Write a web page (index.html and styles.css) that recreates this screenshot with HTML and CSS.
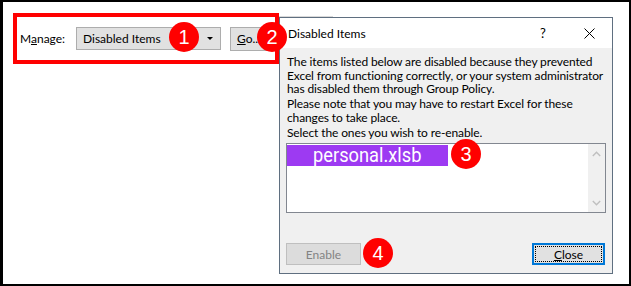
FILE: index.html
```html
<!DOCTYPE html>
<html lang="en">
  <head>
    <meta charset="UTF-8" />
    <title>Disabled Items</title>
    <link rel="stylesheet" href="styles.css">
  </head>
  <body>
    <div class="frame">
      <div class="manage">
        <span class="label">M<u>a</u>nage:</span>
        <div class="combo">
          <span>Disabled Items</span>
          <span class="caret"></span>
        </div>
        <button class="go"><u>G</u>o...</button>
      </div>

      <div class="dialog">
        <div class="titlebar">
          <span class="title">Disabled Items</span>
          <span class="caption help">?</span>
          <span class="caption">
            <svg width="11" height="11" viewBox="0 0 11 11">
              <path d="M0.5 0.5 L10.5 10.5 M10.5 0.5 L0.5 10.5" stroke="#000" stroke-width="1" fill="none" />
            </svg>
          </span>
        </div>
        <div class="body">
          <p>The items listed below are disabled because they prevented<br>Excel from functioning correctly, or your system administrator<br>has disabled them through Group Policy.</p>
          <p>Please note that you may have to restart Excel for these<br>changes to take place.</p>
          <p>Select the ones you wish to re-enable.</p>
          <div class="list">
            <div class="items">
              <div class="item selected"><span>personal.xlsb</span></div>
            </div>
            <div class="scroll">
              <svg width="9" height="6" viewBox="0 0 9 6">
                <path d="M0.8 5 L4.5 1.3 L8.2 5" stroke="#bfbfbf" stroke-width="1.4" fill="none" />
              </svg>
              <svg width="9" height="6" viewBox="0 0 9 6">
                <path d="M0.8 1 L4.5 4.7 L8.2 1" stroke="#bfbfbf" stroke-width="1.4" fill="none" />
              </svg>
            </div>
          </div>
          <div class="actions">
            <button class="btn" disabled>Enable</button>
            <button class="btn close"><span><u>C</u>lose</span></button>
          </div>
        </div>
      </div>

      <span class="edge"></span>
      <span class="badge b1">1</span>
      <span class="badge b2">2</span>
      <span class="badge b3">3</span>
      <span class="badge b4">4</span>
    </div>
  </body>
</html>
```

FILE: styles.css
```css
body {
  margin: 0;
  font-family: "Segoe UI", Lato, sans-serif;
  font-size: 12px;
  color: #000;
}

.frame {
  position: relative;
  display: flex;
  align-items: flex-start;
  width: 631px;
  height: 286px;
  box-sizing: border-box;
  border-style: solid;
  border-color: #000;
  border-width: 2px 2px 2px 3px;
  background-color: #fff;
}

/* manage row, red annotation box */
.manage {
  display: flex;
  align-items: center;
  width: 266px;
  height: 51px;
  box-sizing: border-box;
  margin: 11px 0 0 10px;
  padding-left: 3px;
  border: 4px solid #ff0000;
}

.label {
  width: 56px;
}

.combo {
  display: flex;
  align-items: center;
  width: 145px;
  height: 23px;
  box-sizing: border-box;
  padding: 0 7px 0 6px;
  border: 1px solid #adadad;
  background-color: #e1e1e1;
}

.caret {
  margin-left: auto;
  border-left: 3px solid transparent;
  border-right: 3px solid transparent;
  border-top: 3px solid #000;
}

.go {
  width: 38px;
  height: 24px;
  margin-left: 9px;
  padding: 0;
  border: 1px solid #adadad;
  background-color: #e1e1e1;
  font: inherit;
}

/* dialog */
.dialog {
  display: flex;
  flex-direction: column;
  width: 334px;
  height: 257px;
  box-sizing: border-box;
  margin-top: 15px;
  border: 1px solid #5f6f80;
  background-color: #f0f0f0;
}

.titlebar {
  display: flex;
  align-items: center;
  height: 30px;
  padding-left: 8px;
  background-color: #fff;
}

.title {
  flex: 1;
}

.caption {
  display: flex;
  justify-content: center;
  align-items: center;
  width: 46px;
}

.help {
  font-size: 13px;
}

.body {
  flex: 1;
  display: flex;
  flex-direction: column;
  padding: 7px 7px 8px 6px;
}

.body p {
  margin: 0 0 1.5px 1px;
  line-height: 13.5px;
  letter-spacing: -0.12px;
  white-space: nowrap;
}

.list {
  display: flex;
  width: 320px;
  height: 70px;
  box-sizing: border-box;
  margin-top: 2px;
  border: 1px solid #828790;
  background-color: #fff;
}

.items {
  flex: 1;
  padding-top: 1px;
}

.item {
  width: 161px;
  height: 21px;
  padding-left: 26px;
  box-sizing: border-box;
}

.item.selected {
  background-color: #9d3af2;
  color: #fff;
}

.item span {
  display: inline-block;
  font-family: Roboto, sans-serif;
  font-size: 21px;
  line-height: 20px;
  transform: scaleX(0.87);
  transform-origin: left center;
}

.scroll {
  display: flex;
  flex-direction: column;
  justify-content: space-between;
  align-items: center;
  width: 17px;
  padding: 7px 0 6px;
  box-sizing: border-box;
  background-color: #f0f0f0;
}

.actions {
  display: flex;
  justify-content: space-between;
  margin-top: auto;
}

.btn {
  display: flex;
  width: 75px;
  height: 22px;
  padding: 0;
  justify-content: center;
  align-items: center;
  border: 1px solid #bfbfbf;
  background-color: #dcdcdc;
  color: #838383;
  font: inherit;
}

.btn.close {
  width: 73px;
  padding: 1px;
  border: 2px solid #0078d7;
  background-color: #e1e1e1;
  color: #000;
}

.close span {
  display: flex;
  flex: 1;
  align-self: stretch;
  justify-content: center;
  align-items: center;
  border: 1px dotted #000;
}

/* overlays */
.edge {
  position: absolute;
  left: 276px;
  top: 14px;
  width: 54px;
  height: 1px;
  background-color: #d9d9d9;
}

.badge {
  position: absolute;
  display: flex;
  justify-content: center;
  align-items: center;
  width: 30px;
  height: 30px;
  border-radius: 50%;
  background-color: #ff0000;
  color: #fff;
  font-family: "Liberation Sans", Arial, sans-serif;
  font-size: 20px;
}

.b1 { left: 166px; top: 20px; }
.b2 { left: 254px; top: 20px; }
.b3 { left: 448px; top: 137px; }
.b4 { left: 360px; top: 236px; }
```
